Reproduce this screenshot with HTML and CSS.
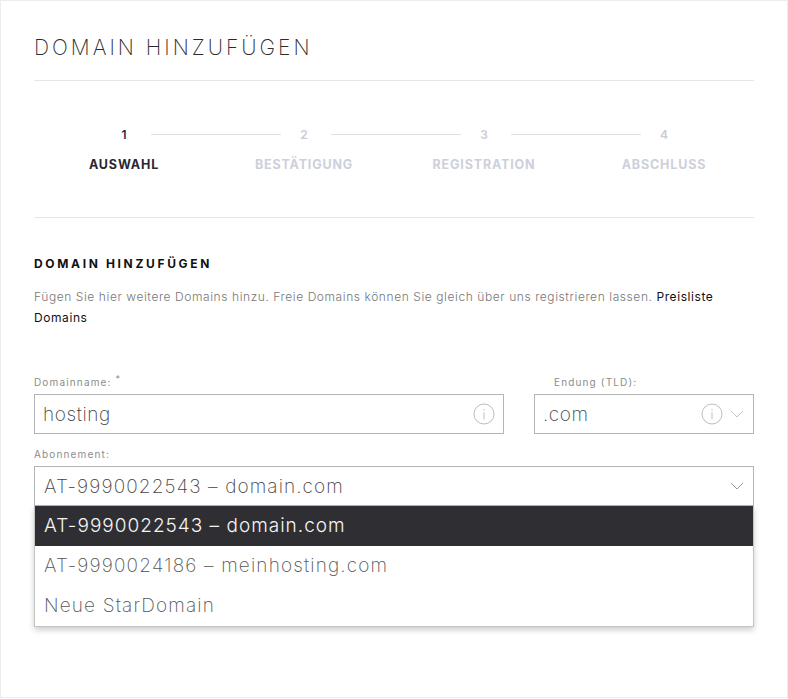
FILE: index.html
```html
<!DOCTYPE html>
<html lang="de">
<head>
<meta charset="utf-8">
<title>Domain hinzufügen</title>
<link rel="stylesheet" href="styles.css">
</head>
<body>
<main class="card">
  <h1 class="title">DOMAIN HINZUFÜGEN</h1>
  <section class="steps">
    <div class="step-numbers">
      <span class="num num-active">1</span><span class="connector"></span>
      <span class="num">2</span><span class="connector"></span>
      <span class="num">3</span><span class="connector"></span>
      <span class="num">4</span>
    </div>
    <div class="step-labels">
      <span class="step-label step-label-active">AUSWAHL</span>
      <span class="step-label">BESTÄTIGUNG</span>
      <span class="step-label">REGISTRATION</span>
      <span class="step-label">ABSCHLUSS</span>
    </div>
  </section>
  <h2 class="heading">DOMAIN HINZUFÜGEN</h2>
  <p class="intro">Fügen Sie hier weitere Domains hinzu. Freie Domains können Sie gleich über uns registrieren lassen. <a class="intro-link" href="#">Preisliste Domains</a></p>
  <form class="form">
    <div class="row">
      <div class="field field-name">
        <label class="label">Domainname: <sup class="req">*</sup></label>
        <div class="control">
          <span class="value">hosting</span>
          <svg class="info" viewBox="0 0 22 22"><circle cx="11" cy="11" r="10"/><path d="M11 9.5V16.5M11 6V7.4"/></svg>
        </div>
      </div>
      <div class="field field-tld">
        <label class="label label-tld">Endung (TLD):</label>
        <div class="control">
          <span class="value">.com</span>
          <svg class="info" viewBox="0 0 22 22"><circle cx="11" cy="11" r="10"/><path d="M11 9.5V16.5M11 6V7.4"/></svg>
          <svg class="chevron chevron-light" viewBox="0 0 14 8"><path d="M1 1L7 7L13 1"/></svg>
        </div>
      </div>
    </div>
    <div class="field field-sub">
      <label class="label">Abonnement:</label>
      <div class="select-wrap">
        <div class="control control-select">
          <span class="value value-wide">AT-9990022543 – domain.com</span>
          <svg class="chevron" viewBox="0 0 14 8"><path d="M1 1L7 7L13 1"/></svg>
        </div>
        <ul class="menu">
          <li class="option option-selected">AT-9990022543 – domain.com</li>
          <li class="option">AT-9990024186 – meinhosting.com</li>
          <li class="option">Neue StarDomain</li>
        </ul>
      </div>
    </div>
  </form>
</main>
</body>
</html>
```
FILE: styles.css
```css
* { box-sizing: border-box; }
html, body { margin: 0; padding: 0; background: #fff; }
body { font-family: Inter, "Liberation Sans", sans-serif; }
.card {
  width: 788px;
  height: 698px;
  border: 1px solid #ececec;
  padding: 0 33px;
  background: #fff;
}
.title {
  margin: 0;
  height: 80px;
  padding-top: 35px;
  border-bottom: 1px solid #e6e6e6;
  font-size: 21px;
  line-height: 24px;
  font-weight: 200;
  letter-spacing: 3px;
  color: #2b2b2b;
}
.steps {
  height: 137px;
  border-bottom: 1px solid #e6e6e6;
  padding-top: 45px;
}
.step-numbers { display: flex; align-items: center; height: 16px; padding-left: 80px; }
.num {
  width: 20px;
  height: 16px;
  text-align: center;
  font-size: 12px;
  line-height: 18px;
  font-weight: 600;
  color: #c9ccd6;
}
.num-active { color: #2a2640; }
.connector { width: 130px; height: 1px; margin: 0 13px 0 17px; background: #dde0e6; }
.step-labels { display: grid; grid-template-columns: repeat(4, 180px); margin-top: 15px; }
.step-label {
  text-align: center;
  font-size: 12.5px;
  line-height: 16px;
  font-weight: 700;
  letter-spacing: 0.85px;
  color: #cdd0da;
}
.step-label-active { color: #2b2630; }
.heading {
  margin: 38px 0 0;
  font-size: 12px;
  line-height: 16px;
  font-weight: 700;
  letter-spacing: 2.65px;
  color: #111;
}
.intro {
  margin: 14px 0 0;
  width: 700px;
  font-size: 12px;
  line-height: 21px;
  font-weight: 300;
  letter-spacing: 0.58px;
  color: #777;
}
.intro-link { color: #111; font-weight: 400; text-decoration: none; }
.form { margin-top: 48px; }
.row { display: flex; gap: 30px; }
.field-name { width: 470px; }
.field-tld { width: 220px; }
.field-sub { margin-top: 14px; }
.label {
  display: block;
  height: 18px;
  font-size: 10px;
  line-height: 13px;
  letter-spacing: 1.15px;
  font-weight: 400;
  color: #8c8c8c;
}
.label-tld { padding-left: 20px; }
.req { font-size: 9px; line-height: 0; }
.control {
  display: flex;
  align-items: center;
  height: 40px;
  padding: 0 8px;
  border: 1px solid #b5b5b5;
  background: #fff;
}
.value {
  flex: 1;
  font-size: 19px;
  font-weight: 200;
  letter-spacing: 0.6px;
  color: #444;
}
.info { width: 22px; height: 22px; fill: none; stroke: #bdbdbd; stroke-width: 1; }
.chevron { width: 14px; height: 8px; margin-left: 11px; margin-right: 1px; fill: none; stroke: #999; stroke-width: 1; }
.chevron-light { stroke: #c4c4c4; margin-left: 7px; }
.select-wrap { position: relative; }
.control-select { padding: 0 8px 0 9px; }
.value-wide { letter-spacing: 1.1px; }
.menu {
  position: absolute;
  top: 40px;
  left: 0;
  width: 720px;
  margin: 0;
  padding: 0;
  list-style: none;
  background: #fff;
  border: 1px solid #c4c4c4;
  border-top: 0;
  box-shadow: 0 3px 6px rgba(0, 0, 0, 0.2);
}
.option {
  height: 40px;
  padding-left: 9px;
  font-size: 19px;
  line-height: 40px;
  font-weight: 200;
  letter-spacing: 1.15px;
  color: #555;
}
.option-selected { background: #2f2f33; color: #f5f5f5; font-weight: 300; letter-spacing: 1px; }
```
